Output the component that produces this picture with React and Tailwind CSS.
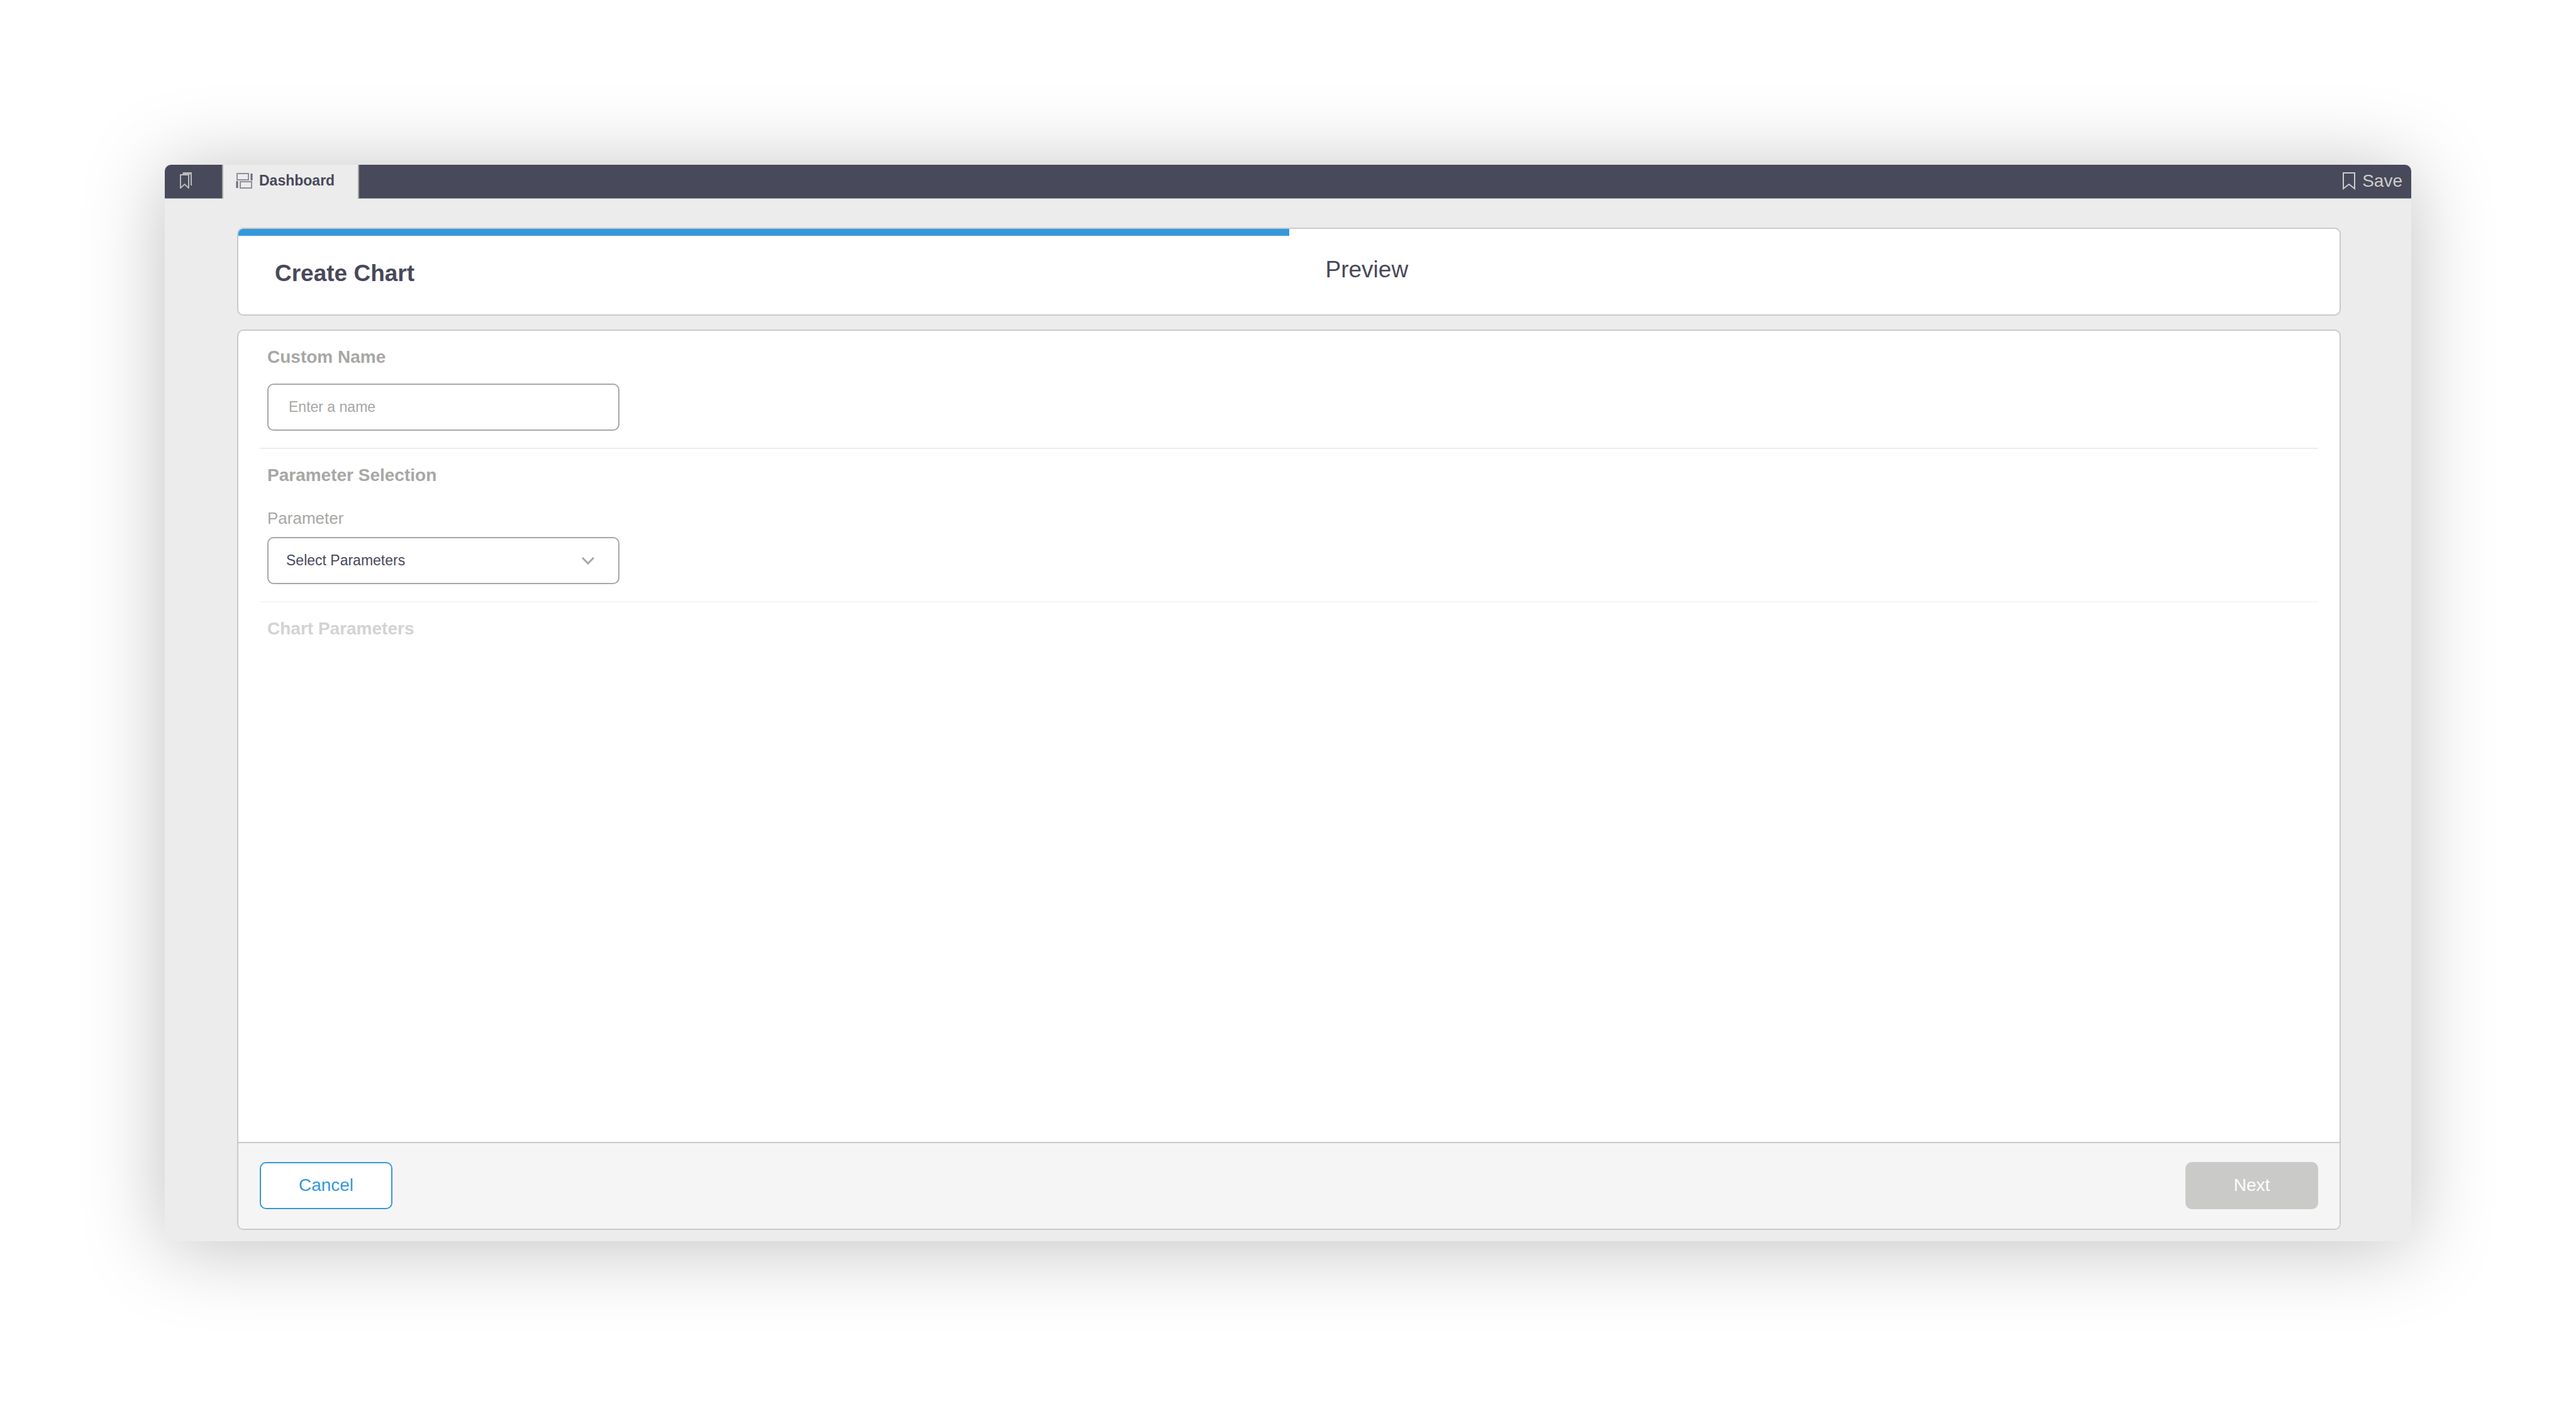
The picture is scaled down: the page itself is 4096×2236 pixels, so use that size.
import React from 'react';

const BookmarksIcon = () => (
  <svg className="w-5 h-[26px]" viewBox="0 0 20 26" fill="none" stroke="currentColor" strokeWidth="2">
    <path d="M1 4H14V25L7.5 19L1 25Z" />
    <path d="M5 1H18V21" />
    <path d="M4 2.5H17" />
  </svg>
);

const DashboardIcon = () => (
  <svg className="w-[27px] h-[25px] text-[#8f8f9c]" viewBox="0 0 27 25" fill="none" stroke="currentColor" strokeWidth="2">
    <rect x="2" y="1" width="18" height="10" />
    <path d="M25 1V12" stroke="#6c6878" strokeWidth="3" />
    <rect x="7" y="14" width="18" height="10" />
    <path d="M2 13V24" stroke="#6c6878" strokeWidth="3" />
  </svg>
);

const BookmarkIcon = () => (
  <svg className="w-[22px] h-7" viewBox="0 0 22 28" fill="none" stroke="currentColor" strokeWidth="2">
    <path d="M2 1H20V26L11 19L2 26Z" />
  </svg>
);

const ChevronIcon = () => (
  <svg
    className="absolute right-10 top-1/2 -translate-y-1/2 w-5 h-3 text-[#a7a7a5] pointer-events-none"
    viewBox="0 0 20 12"
    fill="none"
    stroke="currentColor"
    strokeWidth="3"
  >
    <path d="M1 1L10 10L19 1" />
  </svg>
);

const App = () => {
  return (
    <div
      className="min-h-screen bg-white px-[262px] py-[262px] flex flex-col text-[#48495a]"
      style={{ fontFamily: '"Liberation Sans", Arial, sans-serif' }}
    >
      <div className="flex-1 flex flex-col bg-[#ececec] rounded-t-[10px] shadow-[0_8px_130px_rgba(0,0,0,0.25)]">
        {/* Top bar */}
        <header className="flex h-[54px] bg-[#48495a] border-b border-[#8b8c96] rounded-t-[10px]">
          <button type="button" aria-label="Bookmarks" className="w-[91px] pl-6 pb-1 text-[#b9b9bd]">
            <BookmarksIcon />
          </button>
          <a
            href="#dashboard"
            className="flex items-center gap-[10px] w-[218px] -mb-px pl-5 pb-1 bg-[#ececec] border-x-2 border-[#a7a7a5] text-[23px] leading-7 font-bold"
          >
            <DashboardIcon />
            Dashboard
          </a>
          <button type="button" className="ml-auto flex items-center gap-[10px] pr-[14px] pb-0.5 text-[28px] leading-8 text-[#cccccc]">
            <BookmarkIcon />
            Save
          </button>
        </header>

        <main className="flex-1 flex flex-col gap-[22px] pl-[115px] pr-[112px] pt-[46px] pb-[18px]">
          {/* Steps */}
          <nav className="grid grid-cols-2 h-[140px] bg-white border-2 border-[#cacaca] rounded-[10px] overflow-hidden text-[37px] leading-10">
            <a href="#create" className="border-t-[11px] border-[#3598db] pt-10 pl-[58px] font-bold">
              Create Chart
            </a>
            <a href="#preview" className="pt-[45px] pl-[58px]">
              Preview
            </a>
          </nav>

          <form className="flex-1 flex flex-col bg-white border-2 border-[#cacaca] rounded-[10px] overflow-hidden">
            <div className="flex-1 px-[34px]">
              <section className="h-[188px] px-3 pt-[26px] border-b-2 border-[#ececec]">
                <label htmlFor="name" className="block text-[28px] leading-8 font-bold text-[#a7a7a5]">
                  Custom Name
                </label>
                <input
                  id="name"
                  type="text"
                  placeholder="Enter a name"
                  className="block mt-[26px] w-[560px] h-[75px] px-8 bg-white border-2 border-[#a7a7a5] rounded-[10px] text-[23px] placeholder:text-[#a7a7a5]"
                />
              </section>

              <section className="h-[244px] px-3 pt-[26px] border-b-2 border-[#f5f5f5]">
                <h2 className="text-[28px] leading-8 font-bold text-[#a7a7a5]">Parameter Selection</h2>
                <label htmlFor="parameter" className="block mt-9 text-[26px] leading-8 text-[#a7a7a5]">
                  Parameter
                </label>
                <div className="relative mt-[14px] w-[560px]">
                  <select
                    id="parameter"
                    className="block appearance-none w-full h-[75px] px-7 bg-white border-2 border-[#a7a7a5] rounded-[10px] text-[23px]"
                  >
                    <option>Select Parameters</option>
                  </select>
                  <ChevronIcon />
                </div>
              </section>

              <section className="px-3 pt-[26px]">
                <h2 className="text-[28px] leading-8 font-bold text-[#d3d3d2]">Chart Parameters</h2>
              </section>
            </div>

            <footer className="flex items-center justify-between h-[138px] px-[34px] pb-0.5 bg-[#f5f5f5] border-t-2 border-[#cacaca] text-[28px]">
              <button
                type="button"
                className="w-[211px] h-[75px] bg-white border-2 border-[#3598db] rounded-[10px] text-[#3598db]"
              >
                Cancel
              </button>
              <button type="submit" disabled className="w-[211px] h-[75px] bg-[#cacac8] rounded-[10px] text-white">
                Next
              </button>
            </footer>
          </form>
        </main>
      </div>
    </div>
  );
};

export default App;
